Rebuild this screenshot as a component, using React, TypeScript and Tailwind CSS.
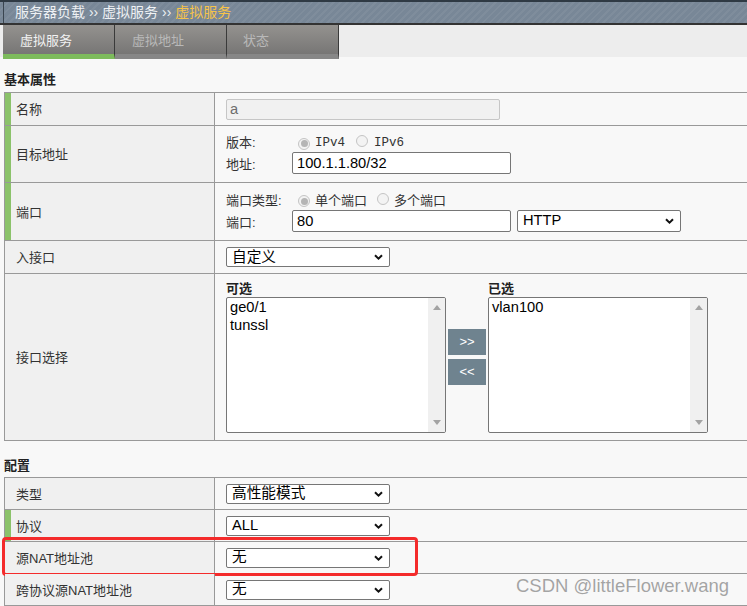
import React from "react";

function Chevron() {
  return (
    <svg width="9" height="6" viewBox="0 0 9 6" className="shrink-0">
      <path d="M1 1.2 L4.5 4.6 L8 1.2" fill="none" stroke="#111" strokeWidth="2" />
    </svg>
  );
}

function Select({ value, h = "h-[20px]" }: { value: string; h?: string }) {
  return (
    <div
      className={`flex w-[164px] items-center justify-between rounded-[2px] border border-[#767676] bg-white pl-[5px] pr-[6px] text-[14.67px] leading-none text-black ${h}`}
    >
      <span>{value}</span>
      <Chevron />
    </div>
  );
}

function Radio({ checked }: { checked?: boolean }) {
  return (
    <span className="inline-flex h-[12px] w-[12px] shrink-0 items-center justify-center rounded-full border border-[#c4c4c4] bg-[#f3f3f3]">
      {checked && <span className="h-[7px] w-[7px] rounded-full bg-[#b5b5b5]" />}
    </span>
  );
}

function Row({
  label,
  green,
  h,
  children,
  extra,
}: {
  label: string;
  green?: boolean;
  h: string;
  children?: React.ReactNode;
  extra?: React.ReactNode;
}) {
  return (
    <div className={`relative flex border-b border-[#999] ${h}`}>
      <div
        className={`flex w-[210px] shrink-0 items-center border-l-[6px] border-r border-r-[#999] bg-[#f0f0f0] pl-[5px] pt-[2px] text-[13px] text-[#333] ${
          green ? "border-l-[#8bc26a]" : "border-l-[#f0f0f0]"
        }`}
      >
        {label}
      </div>
      <div className="flex min-w-0 flex-1 flex-col justify-center pl-[11px]">{children}</div>
      {extra}
    </div>
  );
}

function Listbox({ items }: { items: string[] }) {
  return (
    <div className="flex h-[136px] w-[220px] overflow-hidden rounded-[2px] border border-[#767676] bg-white">
      <div className="flex-1 pl-[3px] text-[14.67px] leading-[18px] text-black">
        {items.map((i) => (
          <div key={i}>{i}</div>
        ))}
      </div>
      <div className="flex w-[17px] flex-col items-center justify-between bg-[#f0f0f0] pb-[7px] pt-[7px]">
        <svg width="8" height="5" viewBox="0 0 8 5">
          <path d="M0 5 L4 0 L8 5 Z" fill="#a3a3a3" />
        </svg>
        <svg width="8" height="5" viewBox="0 0 8 5">
          <path d="M0 0 L4 5 L8 0 Z" fill="#a3a3a3" />
        </svg>
      </div>
    </div>
  );
}

export default function App() {
  return (
    <div className="relative min-h-[606px] w-full overflow-hidden bg-[#f8f8f8] font-['Liberation_Sans','Noto_Sans_CJK_SC',sans-serif]">
      {/* header */}
      <div className="h-[25px] border-b-2 border-t-2 border-b-[#333] border-t-[#2f3a44] bg-[#788797] bg-[image:repeating-linear-gradient(135deg,rgba(255,255,255,0.05)_0_2px,transparent_2px_5px)]">
        <div className="ml-[3px] flex h-full items-center border-l border-[#3a4550] pl-[11px] text-[14px] text-[#eef1f4]">
          <span>服务器负载 ›› 虚拟服务 ›› </span>
          <span className="ml-[4px] text-[#f6c349]">虚拟服务</span>
        </div>
      </div>

      {/* tabs */}
      <div className="flex h-[34px] bg-[image:linear-gradient(#ededed_32px,#f8f8f8_32px)]">
        <div className="ml-[3px] flex">
          <div className="flex h-[34px] w-[112px] items-center border-b-[5px] border-r border-b-[#7dbb5c] border-r-[#3a3a3a] bg-[image:linear-gradient(#94928f,#777675)] pl-[17px] pt-[2px] text-[13px] text-[#f2f2f2]">
            虚拟服务
          </div>
          <div className="flex h-[34px] w-[112px] items-center border-b-[5px] border-r border-b-[#878787] border-r-[#3a3a3a] bg-[image:linear-gradient(#94928f,#777675)] pl-[17px] pt-[2px] text-[13px] text-[#b9b9b9]">
            虚拟地址
          </div>
          <div className="flex h-[34px] w-[112px] items-center border-b-[5px] border-r border-b-[#878787] border-r-[#3a3a3a] bg-[image:linear-gradient(#94928f,#777675)] pl-[16px] pt-[2px] text-[13px] text-[#b9b9b9]">
            状态
          </div>
        </div>
      </div>

      {/* 基本属性 */}
      <div className="pb-[3px] pl-[4px] pt-[12px] text-[13px] font-bold leading-[18px] text-[#222]">基本属性</div>
      <div className="ml-[4px] border-l border-t border-[#999]">
        <Row label="名称" green h="h-[33px]">
          <div className="flex h-[21px] w-[274px] items-center rounded-[2px] border border-[#c6c6c6] bg-[#f1f1f1] pl-[3px] text-[14.67px] text-[#6d6d6d]">
            a
          </div>
        </Row>
        <Row label="目标地址" green h="h-[57px]">
          <div className="flex h-[18px] items-center text-[13px] text-[#333]">
            <span className="w-[66px]">版本:</span>
            <span className="ml-[6px]">
              <Radio checked />
            </span>
            <span className="ml-[5px] font-['Liberation_Mono',monospace] text-[12.5px] text-[#333]">IPv4</span>
            <span className="ml-[11px]">
              <Radio />
            </span>
            <span className="ml-[6px] font-['Liberation_Mono',monospace] text-[12.5px] text-[#333]">IPv6</span>
          </div>
          <div className="flex h-[22px] items-center text-[13px] text-[#333]">
            <span className="w-[66px] pt-[4px]">地址:</span>
            <div className="flex h-[22px] w-[219px] items-center rounded-[2px] border border-[#767676] bg-white pl-[4px] text-[14.67px] text-black">
              100.1.1.80/32
            </div>
          </div>
        </Row>
        <Row label="端口" green h="h-[58px]">
          <div className="flex h-[18px] items-center text-[13px] text-[#333]">
            <span className="w-[66px]">端口类型:</span>
            <span className="ml-[6px]">
              <Radio checked />
            </span>
            <span className="ml-[5px]">单个端口</span>
            <span className="ml-[10px]">
              <Radio />
            </span>
            <span className="ml-[5px]">多个端口</span>
          </div>
          <div className="flex h-[22px] items-center text-[13px] text-[#333]">
            <span className="w-[66px] pt-[4px]">端口:</span>
            <div className="flex h-[22px] w-[219px] items-center rounded-[2px] border border-[#767676] bg-white pl-[4px] text-[14.67px] text-black">
              80
            </div>
            <div className="ml-[6px]">
              <Select value="HTTP" h="h-[22px]" />
            </div>
          </div>
        </Row>
        <Row label="入接口" h="h-[33px]">
          <Select value="自定义" />
        </Row>
        <Row label="接口选择" h="h-[167px]">
          <div className="flex items-start pt-[0px]">
            <div className="flex flex-col">
              <div className="h-[16px] text-[13px] font-bold leading-[16px] text-[#222]">可选</div>
              <Listbox items={["ge0/1", "tunssl"]} />
            </div>
            <div className="ml-[2px] mt-[48px] flex flex-col gap-[4px]">
              <div className="flex h-[26px] w-[38px] items-center justify-center bg-[#6f838f] text-[13px] text-white">
                &gt;&gt;
              </div>
              <div className="flex h-[26px] w-[38px] items-center justify-center bg-[#6f838f] text-[13px] text-white">
                &lt;&lt;
              </div>
            </div>
            <div className="ml-[2px] flex flex-col">
              <div className="h-[16px] text-[13px] font-bold leading-[16px] text-[#222]">已选</div>
              <Listbox items={["vlan100"]} />
            </div>
          </div>
        </Row>
      </div>

      {/* 配置 */}
      <div className="pb-[2px] pl-[4px] pt-[16px] text-[13px] font-bold leading-[18px] text-[#222]">配置</div>
      <div className="ml-[4px] border-l border-t border-[#999]">
        <Row label="类型" h="h-[32px]">
          <Select value="高性能模式" />
        </Row>
        <Row label="协议" green h="h-[32px]">
          <Select value="ALL" />
        </Row>
        <Row
          label="源NAT地址池"
          h="h-[32px]"
          extra={
            <div className="pointer-events-none absolute left-[-3px] top-[-5px] h-[39px] w-[416px] rounded-[4px] border-[3px] border-[#f42b2b]" />
          }
        >
          <Select value="无" />
        </Row>
        <Row label="跨协议源NAT地址池" h="h-[32px]">
          <Select value="无" />
        </Row>
      </div>

      {/* watermark */}
      <div className="absolute left-[516px] top-[575px] text-[18.5px] leading-[22px] text-[#a4a4a4] [text-shadow:0_0_1px_#fff,0_0_1px_#fff]">
        CSDN @littleFlower.wang
      </div>
    </div>
  );
}
